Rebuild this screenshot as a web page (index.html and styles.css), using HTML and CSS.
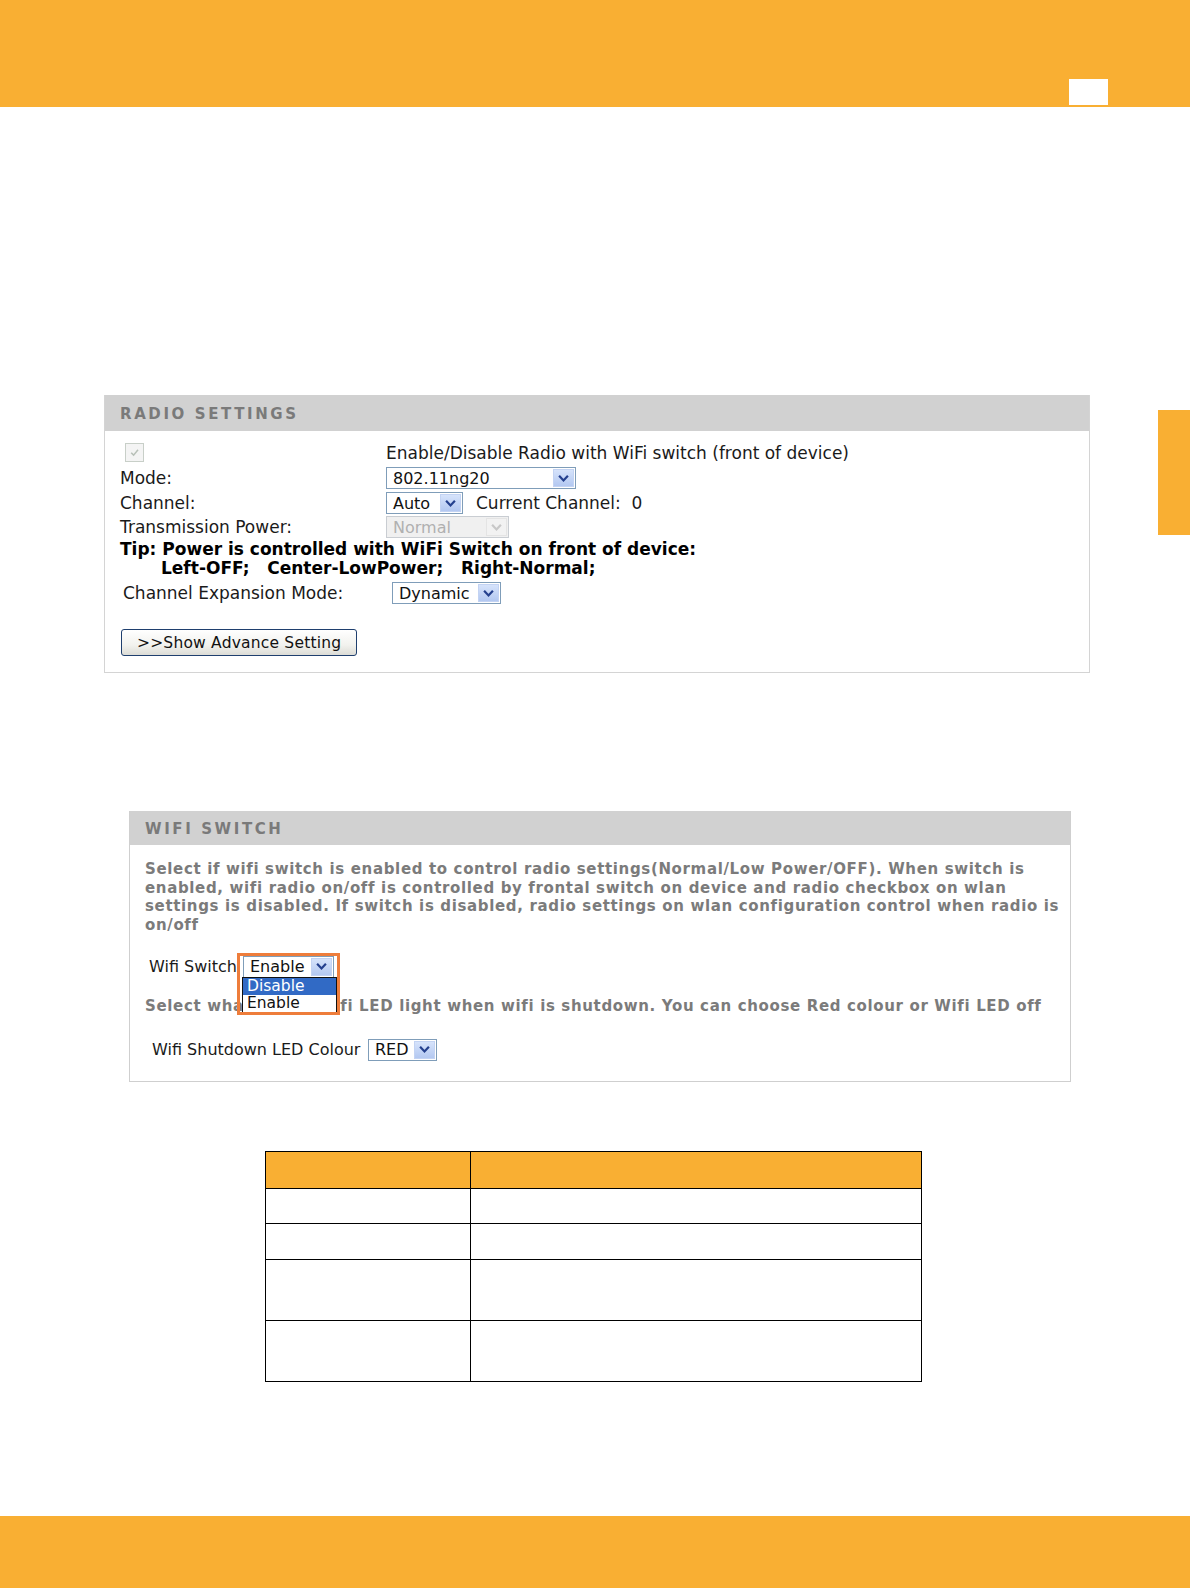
FILE: index.html
```html
<!DOCTYPE html>
<html>
<head>
<meta charset="utf-8">
<link rel="stylesheet" href="styles.css">
</head>
<body>
<div class="page">
  <header class="top"><div class="pagebox"></div></header>
  <div class="sidetab"></div>

  <section class="panel radio">
    <div class="panel-head">RADIO SETTINGS</div>
    <div class="radio-body">
      <div class="grid">
        <div class="lbl"><span class="chk"><svg viewBox="0 0 10 10" width="11" height="11"><path d="M2 5.2 L4.2 7.4 L8.2 2.6" fill="none" stroke="#b8c0b8" stroke-width="1.4"/></svg></span></div>
        <div class="val">Enable/Disable Radio with WiFi switch (front of device)</div>
        <div class="lbl">Mode:</div>
        <div class="val"><span class="sel w190"><span class="sv">802.11ng20</span><span class="arr"><svg viewBox="0 0 10 8" width="11" height="9"><path d="M1 1.5 L5 5.8 L9 1.5" fill="none" stroke="#24408e" stroke-width="2"/></svg></span></span></div>
        <div class="lbl">Channel:</div>
        <div class="val"><span class="sel w77"><span class="sv">Auto</span><span class="arr"><svg viewBox="0 0 10 8" width="11" height="9"><path d="M1 1.5 L5 5.8 L9 1.5" fill="none" stroke="#24408e" stroke-width="2"/></svg></span></span><span class="cur">Current Channel:&nbsp; 0</span></div>
        <div class="lbl">Transmission Power:</div>
        <div class="val"><span class="sel w123 dis"><span class="sv">Normal</span><span class="arr"><svg viewBox="0 0 10 8" width="11" height="9"><path d="M1 1.5 L5 5.8 L9 1.5" fill="none" stroke="#c8c8c8" stroke-width="2"/></svg></span></span></div>
      </div>
      <div class="tip">Tip: Power is controlled with WiFi Switch on front of device:</div>
      <div class="tip tip2">Left-OFF;&nbsp;&nbsp; Center-LowPower;&nbsp;&nbsp; Right-Normal;</div>
      <div class="exp">
        <span class="explbl">Channel Expansion Mode:</span>
        <span class="sel w109"><span class="sv">Dynamic</span><span class="arr"><svg viewBox="0 0 10 8" width="11" height="9"><path d="M1 1.5 L5 5.8 L9 1.5" fill="none" stroke="#24408e" stroke-width="2"/></svg></span></span>
      </div>
      <button class="btn">&gt;&gt;Show Advance Setting</button>
    </div>
  </section>

  <section class="panel wifi">
    <div class="panel-head">WIFI SWITCH</div>
    <div class="wifi-body">
      <p class="desc">Select if wifi switch is enabled to control radio settings(Normal/Low Power/OFF). When switch is enabled, wifi radio on/off is controlled by frontal switch on device and radio checkbox on wlan settings is disabled. If switch is disabled, radio settings on wlan configuration control when radio is on/off</p>
      <div class="swrow">
        <span class="swlbl">Wifi Switch</span>
        <span class="swwrap">
          <span class="sel w91"><span class="sv">Enable</span><span class="arr"><svg viewBox="0 0 10 8" width="11" height="9"><path d="M1 1.5 L5 5.8 L9 1.5" fill="none" stroke="#24408e" stroke-width="2"/></svg></span></span>
          <span class="droplist"><span class="opt on">Disable</span><span class="opt">Enable</span></span>
          <span class="hl"></span>
        </span>
      </div>
      <p class="desc desc2">Select what colour wifi LED light when wifi is shutdown. You can choose Red colour or Wifi LED off</p>
      <div class="ledrow">
        <span class="ledlbl">Wifi Shutdown LED Colour</span>
        <span class="sel w69"><span class="sv">RED</span><span class="arr"><svg viewBox="0 0 10 8" width="11" height="9"><path d="M1 1.5 L5 5.8 L9 1.5" fill="none" stroke="#24408e" stroke-width="2"/></svg></span></span>
      </div>
    </div>
  </section>

  <table class="tbl">
    <tr class="th"><td class="c1"></td><td></td></tr>
    <tr class="r35"><td class="c1"></td><td></td></tr>
    <tr class="r36"><td class="c1"></td><td></td></tr>
    <tr class="r61"><td class="c1"></td><td></td></tr>
    <tr class="r61"><td class="c1"></td><td></td></tr>
  </table>

  <footer class="bottom"></footer>
</div>
</body>
</html>
```
FILE: styles.css
```css
* { box-sizing: border-box; }
html, body { margin: 0; padding: 0; background: #fff; }
.page {
  position: relative;
  width: 1190px;
  height: 1588px;
  overflow: hidden;
  font-family: "DejaVu Sans", Verdana, sans-serif;
  font-size: 17px;
  color: #1a1a1a;
  display: flex;
  flex-direction: column;
}
.top {
  height: 107px;
  background: #f9af33;
  display: flex;
  justify-content: flex-end;
  align-items: flex-end;
  padding: 0 82px 2px 0;
  flex: none;
}
.pagebox { width: 39px; height: 26px; background: #fff; }
.sidetab {
  position: absolute;
  right: 0;
  top: 410px;
  width: 32px;
  height: 125px;
  background: #f9af33;
}

.panel {
  border: 1px solid #d4d4d4;
  background: #fff;
  flex: none;
}
.panel-head {
  background: #d1d1d1;
  color: #7a7a7a;
  font-weight: bold;
  letter-spacing: 2.6px;
  font-size: 15px;
}
.radio {
  margin: 288px 0 0 104px;
  width: 986px;
  height: 278px;
  border-top: none;
}
.radio .panel-head { height: 36px; line-height: 38px; padding-left: 15px; }
.radio-body { padding: 9px 0 0 15px; }
.grid {
  display: grid;
  grid-template-columns: 266px auto;
  grid-template-rows: 25px 26px 24px 24px;
  align-items: center;
}
.lbl, .val { display: flex; align-items: center; white-space: nowrap; }
.chk {
  width: 19px; height: 19px;
  border: 1px solid #c8cfc8;
  background: #f4f4f4;
  margin-left: 5px;
  display: inline-flex; align-items: center; justify-content: center;
}
.sel {
  display: inline-flex;
  align-items: center;
  justify-content: space-between;
  height: 22px;
  border: 1px solid #7f9db9;
  background: #fff;
  padding: 0 1px 0 6px;
  font-size: 16px;
  color: #111;
}
.sel .arr {
  width: 21px; height: 18px;
  background: linear-gradient(#d6e3fb, #b3c8f1);
  border: 1px solid #c3d3f3;
  display: inline-flex; align-items: center; justify-content: center;
}
.sel.dis { background: #f0f0f0; border-color: #c9cdd2; color: #b0b0b0; }
.sel.dis .arr { background: #f2f2f2; border-color: #e4e4e4; }
.w190 { width: 190px; }
.w77 { width: 77px; }
.w123 { width: 123px; }
.w109 { width: 109px; }
.w91 { width: 91px; }
.w69 { width: 69px; }
.cur { margin-left: 13px; }

.tip { font-weight: bold; font-size: 17px; line-height: 20px; color: #000; white-space: nowrap; margin-top: 0px; }
.tip2 { padding-left: 41px; margin-top: -1px; }
.exp { display: flex; align-items: center; margin-top: 4px; padding-left: 3px; }
.explbl { width: 269px; }
.btn {
  margin-top: 25px;
  margin-left: 1px;
  width: 236px;
  height: 27px;
  border: 1px solid #1f3f6e;
  border-radius: 3px;
  background: linear-gradient(#ffffff, #f2f2ee 60%, #dcdcd6);
  font-family: "DejaVu Sans", Verdana, sans-serif;
  font-size: 15.5px;
  color: #111;
  text-align: left;
  padding-left: 15px;
  letter-spacing: 0.2px;
}

.wifi {
  margin: 138px 0 0 129px;
  width: 942px;
  height: 271px;
  border-top: none;
  border-color: #cfcfcf;
  font-size: 16px;
}
.wifi .panel-head { height: 34px; line-height: 36px; padding-left: 15px; }
.wifi-body { padding: 15px 0 0 15px; }
.desc {
  margin: 0;
  font-weight: bold;
  color: #7b7b7b;
  font-size: 15px;
  line-height: 18.7px;
  letter-spacing: 0.65px;
  width: 916px;
}
.swrow { display: flex; align-items: center; margin-top: 21px; padding-left: 4px; height: 22px; }
.swlbl { width: 94px; white-space: nowrap; }
.swwrap { position: relative; display: inline-flex; }
.droplist {
  position: absolute;
  left: -1px; top: 21px;
  width: 95px;
  border: 1px solid #111;
  background: #fff;
  display: flex; flex-direction: column;
  z-index: 2;
}
.opt { height: 17px; line-height: 17px; padding-left: 4px; font-size: 15.5px; color: #111; }
.opt.on { background: #316ac5; color: #fff; }
.hl {
  position: absolute;
  left: -6px; top: -3px;
  width: 103px; height: 62px;
  border: 3px solid #ee7d3b;
  z-index: 3;
  pointer-events: none;
}
.desc2 { margin-top: 19px; }
.ledrow { display: flex; align-items: center; margin-top: 23px; padding-left: 7px; height: 22px; }
.ledlbl { width: 216px; white-space: nowrap; }

.tbl {
  margin: 69px 0 0 265px;
  width: 657px;
  border-collapse: collapse;
  flex: none;
}
.tbl td { border: 1.5px solid #000; padding: 0; }
.tbl .c1 { width: 205px; }
.tbl .th td { background: #f9af33; height: 37px; }
.r35 td { height: 35px; }
.r36 td { height: 36px; }
.r61 td { height: 61px; }

.bottom {
  margin-top: auto;
  height: 72px;
  background: #f9af33;
  flex: none;
}
```
